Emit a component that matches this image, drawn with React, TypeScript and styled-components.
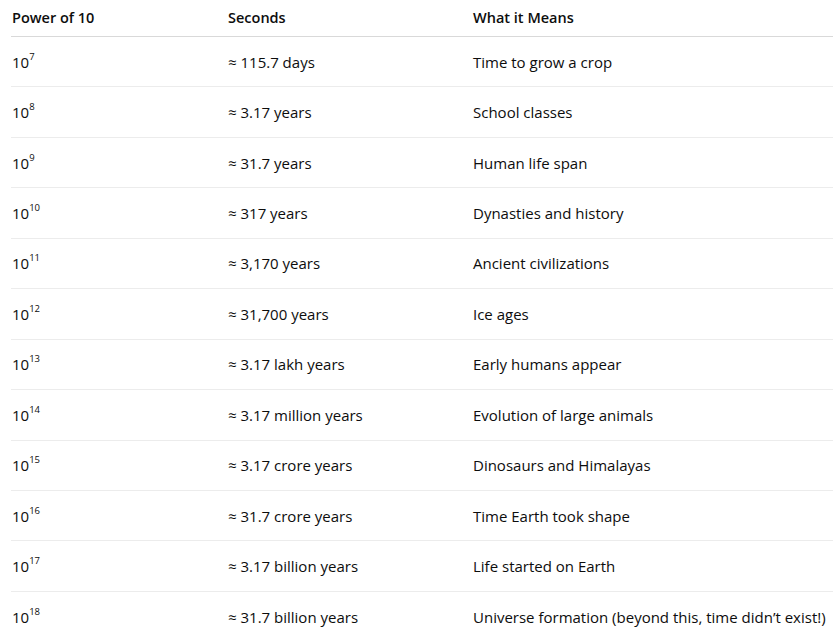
import React from 'react';
import styled, { createGlobalStyle } from 'styled-components';

const GlobalStyle = createGlobalStyle`
  html, body {
    margin: 0;
    padding: 0;
    background: #ffffff;
  }
  body {
    font-family: "Open Sans", "Noto Sans", sans-serif;
    color: #0d0d0d;
  }
`;

interface Entry {
  exp: number;
  seconds: string;
  meaning: string;
}

const rows: Entry[] = [
  { exp: 7, seconds: '≈ 115.7 days', meaning: 'Time to grow a crop' },
  { exp: 8, seconds: '≈ 3.17 years', meaning: 'School classes' },
  { exp: 9, seconds: '≈ 31.7 years', meaning: 'Human life span' },
  { exp: 10, seconds: '≈ 317 years', meaning: 'Dynasties and history' },
  { exp: 11, seconds: '≈ 3,170 years', meaning: 'Ancient civilizations' },
  { exp: 12, seconds: '≈ 31,700 years', meaning: 'Ice ages' },
  { exp: 13, seconds: '≈ 3.17 lakh years', meaning: 'Early humans appear' },
  { exp: 14, seconds: '≈ 3.17 million years', meaning: 'Evolution of large animals' },
  { exp: 15, seconds: '≈ 3.17 crore years', meaning: 'Dinosaurs and Himalayas' },
  { exp: 16, seconds: '≈ 31.7 crore years', meaning: 'Time Earth took shape' },
  { exp: 17, seconds: '≈ 3.17 billion years', meaning: 'Life started on Earth' },
  { exp: 18, seconds: '≈ 31.7 billion years', meaning: 'Universe formation (beyond this, time didn’t exist!)' },
];

const App: React.FC = () => {
  return (
    <>
      <GlobalStyle />
      <Table>
        <HeaderRow>
          <HeadCell>Power of 10</HeadCell>
          <HeadCell>Seconds</HeadCell>
          <HeadCell>What it Means</HeadCell>
        </HeaderRow>
        {rows.map((r, i) => (
          <Row key={r.exp} $last={i === rows.length - 1}>
            <Cell>
              10<Sup>{r.exp}</Sup>
            </Cell>
            <Cell>{r.seconds}</Cell>
            <Cell>{r.meaning}</Cell>
          </Row>
        ))}
      </Table>
    </>
  );
};

const Table = styled.div`
  margin-left: 11px;
  width: 822px;
  display: flex;
  flex-direction: column;
`;

const HeaderRow = styled.div`
  display: grid;
  grid-template-columns: 216px 245px 1fr;
  height: 37px;
  box-sizing: border-box;
  align-items: center;
  border-bottom: 1px solid #d9d9d9;
`;

const Row = styled.div<{ $last?: boolean }>`
  display: grid;
  grid-template-columns: 216px 245px 1fr;
  height: 50.45px;
  box-sizing: border-box;
  align-items: center;
  border-bottom: ${(p) => (p.$last ? 'none' : '1px solid #ececec')};
`;

const HeadCell = styled.div`
  padding-left: 1px;
  font-size: 14.5px;
  font-weight: 600;
  white-space: nowrap;
  padding-bottom: 1px;
`;

const Cell = styled.div`
  padding-left: 1px;
  font-size: 15px;
  font-weight: 400;
  white-space: nowrap;
`;

const Sup = styled.sup`
  font-size: 9.5px;
  line-height: 0;
  position: relative;
  top: -2px;
`;

export default App;
